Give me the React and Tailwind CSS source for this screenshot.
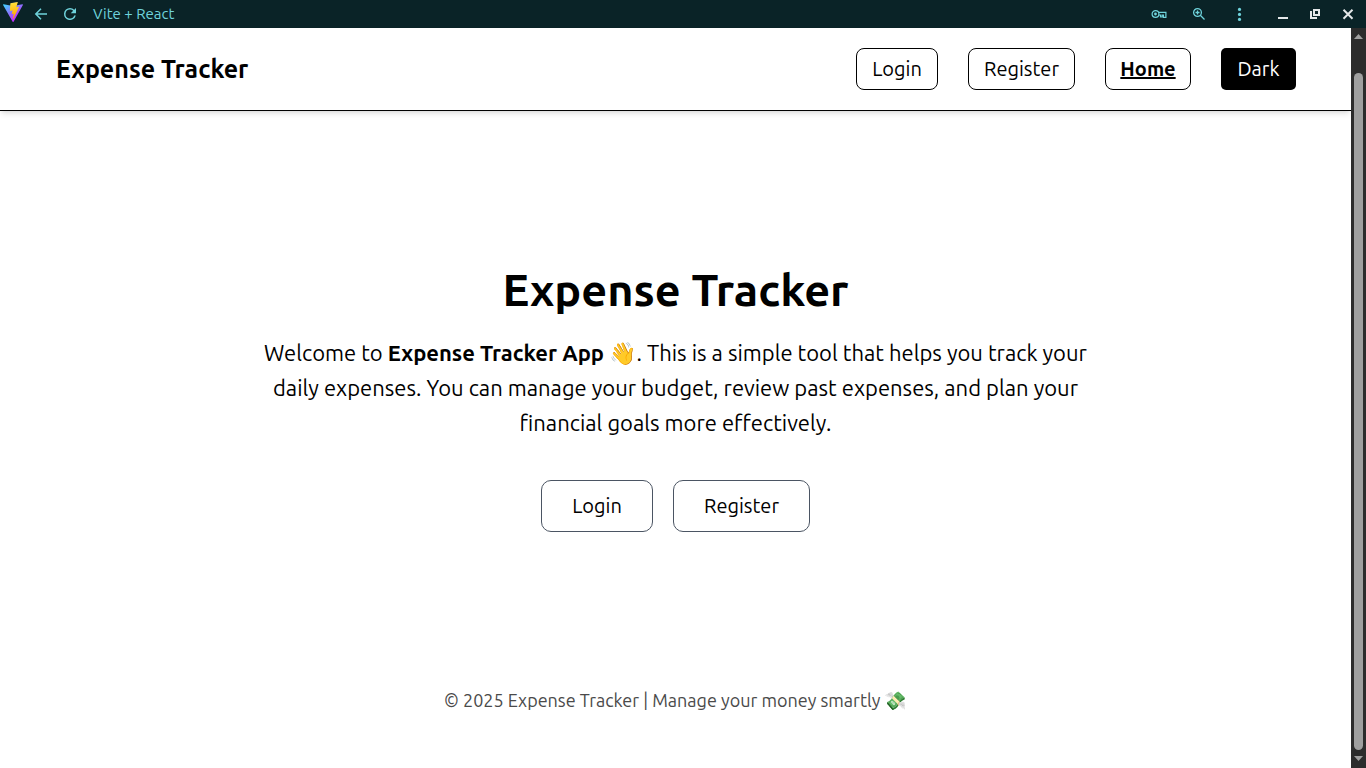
function ViteLogo() {
  return (
    <svg viewBox="0 0 256 257" className="h-5 w-5" aria-hidden="true">
      <defs>
        <linearGradient id="shield" x1="0%" x2="58%" y1="8%" y2="79%">
          <stop offset="0%" stopColor="#41D1FF" />
          <stop offset="100%" stopColor="#BD34FE" />
        </linearGradient>
        <linearGradient id="bolt" x1="43%" x2="50%" y1="2%" y2="89%">
          <stop offset="0%" stopColor="#FFEA83" />
          <stop offset="8%" stopColor="#FFDD35" />
          <stop offset="100%" stopColor="#FFA800" />
        </linearGradient>
      </defs>
      <path fill="url(#shield)" d="M255.153 37.938L134.897 252.976c-2.483 4.44-8.862 4.466-11.382.048L.875 37.958c-2.746-4.814 1.371-10.646 6.827-9.67l120.385 21.517a6.537 6.537 0 0 0 2.322-.004l117.867-21.483c5.438-.991 9.574 4.796 6.877 9.62Z" />
      <path fill="url(#bolt)" d="M185.432.063L96.44 17.501a3.268 3.268 0 0 0-2.634 3.014l-5.474 92.456a3.268 3.268 0 0 0 3.997 3.378l24.777-5.718c2.318-.535 4.413 1.507 3.936 3.838l-7.361 36.047c-.495 2.426 1.782 4.5 4.151 3.78l15.304-4.649c2.372-.72 4.652 1.36 4.15 3.788l-11.698 56.621c-.732 3.542 3.979 5.473 5.943 2.437l1.313-2.028l72.516-144.72c1.215-2.423-.88-5.186-3.54-4.672l-25.505 4.922c-2.396.462-4.435-1.77-3.759-4.114l16.646-57.705c.677-2.35-1.37-4.583-3.769-4.113Z" />
    </svg>
  );
}

function TitleBar() {
  return (
    <div className="flex h-7 shrink-0 items-center bg-[#0a2327] text-[#6fd3dc]">
      <div className="flex w-[25px] justify-center pb-1"><ViteLogo /></div>
      <button aria-label="Back" className="ml-2">
        <svg viewBox="0 0 16 16" className="h-4 w-4" fill="none" stroke="currentColor" strokeWidth="1.5">
          <path d="M14 8H3M8 2.8 2.8 8 8 13.2" />
        </svg>
      </button>
      <button aria-label="Reload" className="ml-3">
        <svg viewBox="0 0 24 24" className="h-[18px] w-[18px]" fill="currentColor">
          <path d="M17.65 6.35A7.96 7.96 0 0 0 12 4a8 8 0 1 0 7.73 10h-2.08A6 6 0 1 1 12 6c1.66 0 3.14.69 4.22 1.78L13 11h7V4z" />
        </svg>
      </button>
      <span className="ml-3.5 grow text-[15px]">Vite + React</span>
      <div className="flex items-center pr-2.5">
        <button aria-label="Passwords">
          <svg viewBox="0 0 16 16" className="h-4 w-4" fill="none" stroke="currentColor" strokeWidth="1.2">
            <circle cx="4.5" cy="8" r="3.4" />
            <circle cx="4.5" cy="8" r="1.4" fill="currentColor" stroke="none" />
            <path d="M7.6 6.3h7.3v5h-2.5V9h-1.3v2H9.5V9H7.8" />
          </svg>
        </button>
        <button aria-label="Zoom" className="ml-6">
          <svg viewBox="0 0 16 16" className="h-4 w-4" fill="none" stroke="currentColor" strokeWidth="1.3">
            <circle cx="6.5" cy="6.5" r="3.9" />
            <path d="m9.3 9.3 4.2 4.2M4.5 6.5h4M6.5 4.5v4" />
          </svg>
        </button>
        <button aria-label="More" className="ml-6">
          <svg viewBox="0 0 16 16" className="h-4 w-4" fill="currentColor">
            <circle cx="8.5" cy="3.4" r="1.6" /><circle cx="8.5" cy="8.4" r="1.6" /><circle cx="8.5" cy="13.4" r="1.6" />
          </svg>
        </button>
        <button aria-label="Minimize" className="ml-7 text-[#e4e7e8]">
          <svg viewBox="0 0 16 16" className="h-4 w-4" fill="currentColor"><path d="M3 11h10v2H3z" /></svg>
        </button>
        <button aria-label="Restore" className="ml-4 text-[#e4e7e8]">
          <svg viewBox="0 0 16 16" className="h-4 w-4" fill="none" stroke="currentColor" strokeWidth="2">
            <path d="M7 4h5v5H7z" />
            <path d="M4 5v7h6" />
          </svg>
        </button>
        <button aria-label="Close" className="ml-[17px] text-[#e4e7e8]">
          <svg viewBox="0 0 16 16" className="h-4 w-4" fill="none" stroke="currentColor" strokeWidth="2">
            <path d="m3.5 3.8 9 9M12.5 3.8l-9 9" />
          </svg>
        </button>
      </div>
    </div>
  );
}

function Scrollbar() {
  return (
    <div className="flex w-[15px] shrink-0 flex-col items-center bg-[#2c2c2c]" aria-hidden="true">
      <svg viewBox="0 0 15 17" className="h-[17px] w-[15px]" fill="#9f9f9f"><path d="M3 11h9L7.5 6z" /></svg>
      <div className="mt-7 w-[9px] grow rounded-full bg-[#9f9f9f]" />
      <svg viewBox="0 0 15 18" className="h-[18px] w-[15px]" fill="#9f9f9f"><path d="M3 6h9l-4.5 5z" /></svg>
    </div>
  );
}

export default function App() {
  return (
    <div className="flex h-screen flex-col overflow-hidden bg-white font-['Ubuntu','Noto_Sans','Noto_Color_Emoji',sans-serif] text-black">
      <TitleBar />
      <div className="flex min-h-0 grow">
        <div className="flex min-w-0 grow flex-col">
          <header className="flex items-center justify-between border-b border-black pr-[55px] pl-14 py-5 shadow-md">
            <span className="text-[25px] leading-8 font-semibold">Expense Tracker</span>
            <nav className="flex gap-[30px] text-xl">
              <a href="#login" className="flex h-[42px] w-[82px] items-center justify-center rounded-lg border border-black">Login</a>
              <a href="#register" className="flex h-[42px] w-[107px] items-center justify-center rounded-lg border border-black">Register</a>
              <a href="#home" className="flex h-[42px] w-[86px] items-center justify-center rounded-lg border border-black font-semibold underline decoration-2">Home</a>
              <button className="h-[42px] w-[75px] rounded-[5px] bg-black text-white">Dark</button>
            </nav>
          </header>
          <main className="flex grow flex-col items-center justify-center px-5 pb-1.5 text-center">
            <h1 className="text-[45px] leading-[60px] font-semibold">Expense Tracker</h1>
            <p className="mt-[15px] max-w-[850px] text-[22px] leading-[35px]">
              Welcome to <strong className="font-semibold">Expense Tracker App</strong> 👋. This is a simple tool that helps you track your daily expenses. You can manage your budget, review past expenses, and plan your financial goals more effectively.
            </p>
            <div className="mt-10 flex gap-5 text-xl">
              <a href="#login" className="flex h-[52px] w-28 items-center justify-center rounded-[10px] border border-[#4b5563]">Login</a>
              <a href="#register" className="flex h-[52px] w-[137px] items-center justify-center rounded-[10px] border border-[#4b5563]">Register</a>
            </div>
          </main>
          <footer className="pb-[54px] text-center text-lg text-[#4a4a4a]">
            © 2025 Expense Tracker | Manage your money smartly 💸
          </footer>
        </div>
        <Scrollbar />
      </div>
    </div>
  );
}
